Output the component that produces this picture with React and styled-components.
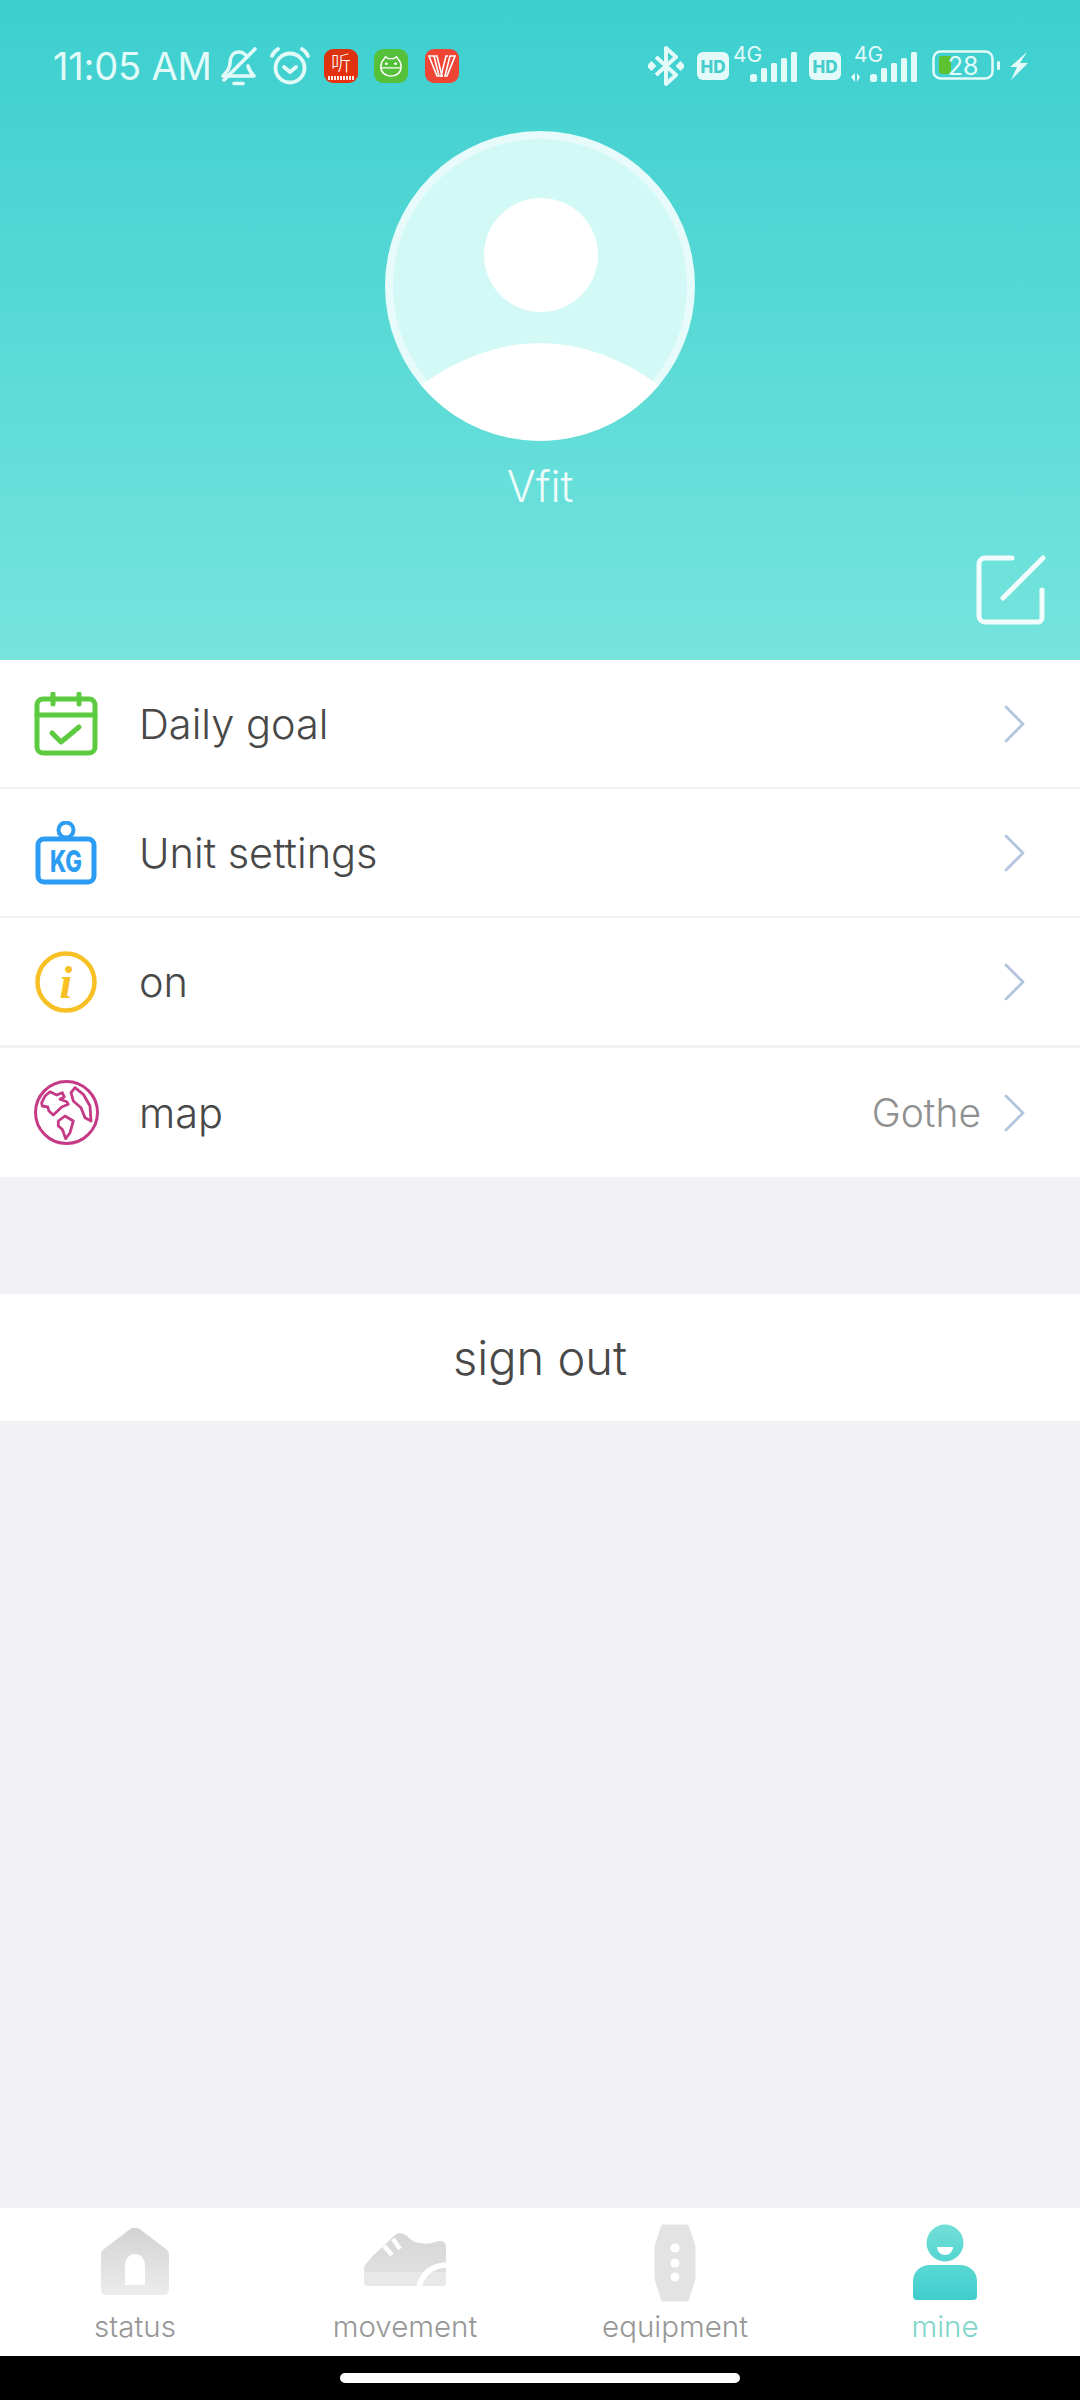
import React from "react"
import styled, { createGlobalStyle } from "styled-components"

const GlobalStyle = createGlobalStyle`
  html, body {
    margin: 0;
    padding: 0;
    background: #f1f1f6;
  }
  * {
    box-sizing: border-box;
  }
`

const Page = styled.div`
  width: 1080px;
  height: 2400px;
  display: flex;
  flex-direction: column;
  font-family: Inter, "Noto Sans", "Liberation Sans", sans-serif;
  background: #f1f1f6;
`

const Header = styled.header`
  height: 660px;
  flex: none;
  display: flex;
  flex-direction: column;
  align-items: center;
  background: linear-gradient(180deg, #3ccfcf 0%, #76e4dd 100%);
`

const StatusBar = styled.div`
  width: 100%;
  height: 131px;
  flex: none;
  padding: 46px 52px 0 53px;
  display: flex;
  justify-content: space-between;
  align-items: flex-start;
  color: #e2fbf9;
`

const StatusGroup = styled.div`
  display: flex;
  align-items: center;
  height: 40px;
`

const Time = styled.span`
  font-size: 38px;
  line-height: 40px;
  font-weight: 400;
  width: 167px;
  white-space: nowrap;
  letter-spacing: -0.2px;
`

const AppBadge = styled.div`
  width: 34px;
  height: 34px;
  flex: none;
  margin-left: ${(p) => p.$gap}px;
  border-radius: 9px;
  background: ${(p) => p.$color};
  display: flex;
  flex-direction: column;
  align-items: center;
  justify-content: center;
  overflow: hidden;
  color: #fff;
`

const BadgeGlyph = styled.span`
  font-size: 20px;
  line-height: 21px;
  font-weight: 300;
  font-family: "Noto Sans CJK SC", sans-serif;
`

const BadgeStrip = styled.span`
  width: 26px;
  height: 4px;
  margin-top: 3px;
  background: repeating-linear-gradient(90deg, #fff 0 2px, transparent 2px 3px);
  opacity: 0.9;
`

const AvatarPicture = styled.svg`
  display: block;
  flex: none;
`

const UserName = styled.div`
  margin-top: 20px;
  font-size: 43px;
  line-height: 50px;
  font-weight: 300;
  color: #ecfcfb;
`

const EditIcon = styled.svg`
  align-self: flex-end;
  margin: 44px 34px 0 0;
  display: block;
`

const MenuList = styled.section`
  flex: none;
  background: #fff;
`

const MenuRow = styled.div`
  height: ${(p) => p.$height}px;
  padding: 0 55px 0 32px;
  display: flex;
  align-items: center;
  border-bottom: ${(p) => p.$rule}px solid #f1f1f3;
`

const IconSlot = styled.div`
  width: 68px;
  height: 68px;
  flex: none;
  display: flex;
  align-items: center;
  justify-content: center;
`

const RowLabel = styled.span`
  margin-left: 39px;
  font-size: 41.500px;
  font-weight: 350;
  color: #484848;
  flex: 1;
`

const RowValue = styled.span`
  font-size: 39px;
  font-weight: 350;
  color: #909090;
  margin-right: 23px;
`

const SignOut = styled.div`
  margin-top: 117px;
  height: 127px;
  flex: none;
  background: #fff;
  display: flex;
  align-items: center;
  justify-content: center;
  font-size: 47px;
  font-weight: 350;
  color: #484848;
`

const Filler = styled.div`
  flex: 1;
`

const TabBar = styled.nav`
  height: 148px;
  flex: none;
  background: #fff;
  display: grid;
  grid-template-columns: repeat(4, 270px);
`

const TabItem = styled.div`
  display: flex;
  flex-direction: column;
  align-items: center;
`

const TabIconSlot = styled.div`
  height: 100px;
  flex: none;
  padding-top: 16px;
  display: flex;
  justify-content: center;
  align-items: flex-start;
`

const TabLabel = styled.span`
  font-size: 29.500px;
  line-height: 36px;
  font-weight: 350;
  color: ${(p) => (p.$active ? "#7fd5cb" : "#979797")};
`

const NavBar = styled.div`
  height: 44px;
  flex: none;
  background: #000;
  display: flex;
  justify-content: center;
  padding-top: 17px;
`

const HomePill = styled.div`
  width: 400px;
  height: 10px;
  border-radius: 5px;
  background: #fff;
`

const BellOff = () => (
  <svg width="38" height="40" viewBox="0 0 38 40" fill="none" stroke="#e2fbf9" strokeWidth="3.600" strokeLinecap="round" strokeLinejoin="round">
    <path d="M27 11c-2-3-4-5-8-5-6 0-9 5-9 11 0 5-3 9-7 13h31c-3-3-5-6-6-10" />
    <path d="M35 3 4 34" />
    <path d="M14 37.500h9" />
  </svg>
)

const AlarmClock = () => (
  <svg width="40" height="38" viewBox="0 0 40 38" fill="none" stroke="#e2fbf9" strokeWidth="3.800" strokeLinecap="round" strokeLinejoin="round" style={{ marginLeft: 12 }}>
    <circle cx="20" cy="21" r="14.500" />
    <path d="M14 20l6 5 6-5" />
    <path d="M2 9c1-3 3-5 6-7" />
    <path d="M38 9c-1-3-3-5-6-7" />
  </svg>
)

const RobotFace = () => (
  <svg width="24" height="24" viewBox="0 0 26 26" fill="none" stroke="#fff" strokeWidth="1.500">
    <path d="M5 6 7 3l3 2h6l3-2 2 3c2 2 3 5 3 8 0 6-5 10-11 10S2 20 2 14c0-3 1-6 3-8Z" />
    <path d="M2 15h22" />
    <path d="M8 9v3M6.500 10.500h3M18 9v3M16.500 10.500h3" />
  </svg>
)

const StripeW = () => (
  <svg width="28" height="24" viewBox="0 0 28 24" fill="none" stroke="#fff" strokeWidth="1.600">
    <path d="M1 2h5l5 20h-2ZM7 2h2l5 20h-2" />
    <path d="M27 2h-5l-5 20h2ZM20 2h-2l-5 20h2" />
  </svg>
)

const Bluetooth = () => (
  <svg width="36" height="40" viewBox="0 0 36 40" fill="#e2fbf9" style={{ marginRight: 13 }}>
    <path d="M8 11l20 18-10 9V2l10 9L8 29" fill="none" stroke="#e2fbf9" strokeWidth="4" strokeLinejoin="round" />
    <rect x="0" y="16.500" width="7" height="7" transform="rotate(45 3.500 20)" />
    <rect x="29" y="16.500" width="7" height="7" transform="rotate(45 32.500 20)" />
  </svg>
)

const HdBadge = ({ gap }) => (
  <svg width="32" height="28" viewBox="0 0 32 28" style={{ marginLeft: gap }}>
    <rect width="32" height="28" rx="6" fill="#e2fbf9" />
    <text x="16" y="20.500" textAnchor="middle" fontSize="17" fontWeight="800" fill="#46cccb" fontFamily="Inter, sans-serif">HD</text>
  </svg>
)

const Signal = ({ arrows }) => (
  <svg width={arrows ? 66 : 64} height="52" viewBox={`0 -6 ${arrows ? 66 : 64} 52`} fill="#e2fbf9" style={{ marginLeft: arrows ? 10 : 4 }}>
    <text x={arrows ? 3 : 0} y="16" fontSize="21" fontFamily="Inter, sans-serif">4G</text>
    {arrows && <path d="M0 31l4-4v9ZM9 31l-3-4v9Z" />}
    <g transform={`translate(${arrows ? 19 : 17} 0)`}>
      <rect x="0" y="28" width="7" height="8" rx="2.500" />
      <rect x="11" y="22" width="6" height="14" rx="1.500" />
      <rect x="21" y="17" width="6" height="19" rx="1.500" />
      <rect x="31" y="12" width="6" height="24" rx="1.500" />
      <rect x="41" y="6" width="6" height="30" rx="1.500" />
    </g>
  </svg>
)

const Battery = () => (
  <svg width="72" height="32" viewBox="0 0 72 32" style={{ marginLeft: 15 }}>
    <rect x="1.500" y="1.500" width="59" height="27" rx="7" fill="none" stroke="#e2fbf9" strokeWidth="2.500" />
    <path d="M7 9a3 3 0 0 1 3-3h9v18h-9a3 3 0 0 1-3-3Z" fill="#5cc22f" />
    <text x="31" y="25" textAnchor="middle" fontSize="25" fill="#e2fbf9" fontFamily="Inter, sans-serif">28</text>
    <rect x="65" y="11" width="3" height="9" rx="1.500" fill="#e2fbf9" />
  </svg>
)

const Bolt = () => (
  <svg width="20" height="28" viewBox="0 0 20 28" fill="#e2fbf9" style={{ marginLeft: 4 }}>
    <path d="M19 0 2 15h7L3 28l17-17h-8Z" />
  </svg>
)

const Avatar = () => (
  <AvatarPicture width="310" height="310" viewBox="0 0 310 310">
    <circle cx="155" cy="155" r="155" fill="#e6fbfa" />
    <circle cx="155" cy="155" r="147" fill="#d3f9f6" />
    <circle cx="156" cy="124" r="57" fill="#fff" />
    <path d="M36 254Q155 170 274 254A155 155 0 0 1 36 254Z" fill="#fff" />
  </AvatarPicture>
)

const Edit = () => (
  <EditIcon width="70" height="70" viewBox="0 0 70 70" fill="none" stroke="#f1fdfc" strokeWidth="5" strokeLinecap="round" strokeLinejoin="round">
    <path d="M36 3H9a6 6 0 0 0-6 6v52a6 6 0 0 0 6 6h53a4 4 0 0 0 4-4V35" />
    <path d="M27 43 67 3" />
  </EditIcon>
)

const CalendarIcon = () => (
  <svg width="64" height="64" viewBox="0 0 64 64" fill="none" stroke="#5ccb3f" strokeWidth="5" strokeLinecap="round" strokeLinejoin="round">
    <rect x="3" y="7" width="58" height="54" rx="6" />
    <path d="M3 23h58M19 2v10M45 2v10" />
    <path d="M18 41l9 9 18-15" />
  </svg>
)

const ScaleIcon = () => (
  <svg width="62" height="64" viewBox="0 0 62 64" fill="none" stroke="#2c9df2" strokeWidth="5">
    <circle cx="31" cy="9" r="7.500" strokeWidth="4" />
    <rect x="3" y="18" width="56" height="43" rx="6" />
    <text x="31" y="51" textAnchor="middle" fontSize="30" fontWeight="800" textLength="32" lengthAdjust="spacingAndGlyphs" fill="#2c9df2" stroke="none" fontFamily="Inter, sans-serif">KG</text>
  </svg>
)

const InfoIcon = () => (
  <svg width="64" height="62" viewBox="0 0 64 62">
    <circle cx="32" cy="31" r="28.500" fill="none" stroke="#f7c024" strokeWidth="4.500" />
    <text x="32" y="47" textAnchor="middle" fontSize="46" fontStyle="italic" fontWeight="700" fill="#f7c024" fontFamily="Liberation Serif, serif">i</text>
  </svg>
)

const GlobeIcon = () => (
  <svg width="66" height="66" viewBox="0 0 66 66" fill="none" stroke="#c53a86" strokeWidth="2.800" strokeLinejoin="round" style={{ marginTop: -2 }}>
    <circle cx="33.500" cy="33.500" r="31" strokeWidth="3" />
    <path d="M8.700 23.700 12 17l5-4.300L23.700 16l5.600-2.300 2 4.300-4.300 2.300 6.700 2.400 1.600 2.600-6.600 2.700-3.400 3.300-5 4.700-4.300-4-1.300-4-5.400-1Z" />
    <path d="M38 13.700 42 8.700l8.300 6.600L57 27l1 15-6-3.300-4-10-7.700-6.700Z" />
    <path d="M25.300 42 32 37l8.300 5-3.300 11.700-4.300 6-3.400-9.400-4-3.300Z" />
  </svg>
)

const Chevron = () => (
  <svg width="21" height="38" viewBox="0 0 21 38" fill="none" stroke="#b3c5de" strokeWidth="2.800" strokeLinecap="round" strokeLinejoin="round">
    <path d="M2 2l17 17L2 36" />
  </svg>
)

const HomeTab = () => (
  <svg width="70" height="68" viewBox="0 0 70 68" style={{ marginTop: 4 }}>
    <defs>
      <linearGradient id="grayFade" x1="0" y1="0" x2="0" y2="1">
        <stop offset="0" stopColor="#d3d3d3" />
        <stop offset="1" stopColor="#ececec" />
      </linearGradient>
    </defs>
    <path d="M29 2a9 9 0 0 1 12 0l25 19a6 6 0 0 1 3 5v36a5 5 0 0 1-5 5H6a5 5 0 0 1-5-5V26a6 6 0 0 1 3-5Z" fill="url(#grayFade)" />
    <path d="M25 57V37a10 11 0 0 1 20 0v20Z" fill="#fff" />
  </svg>
)

const ShoeTab = () => (
  <svg width="82" height="54" viewBox="0 0 82 54" style={{ marginTop: 9 }}>
    <defs>
      <linearGradient id="shoeFade" x1="0" y1="0" x2="0" y2="1">
        <stop offset="0" stopColor="#d6d6d6" />
        <stop offset="0.74" stopColor="#dfdfdf" />
        <stop offset="0.74" stopColor="#e8e8e8" />
        <stop offset="1" stopColor="#e8e8e8" />
      </linearGradient>
    </defs>
    <path d="M31 2c4-3 9-2 12 1 4 4 8 7 13 7 5 1 10 1 15-1 5-2 11-1 11 5v36a3 3 0 0 1-3 3H3a3 3 0 0 1-3-3V34c3-5 7-10 12-14Z" fill="url(#shoeFade)" />
    <path d="M55 54c3-12 11-21 27-22" fill="none" stroke="#fff" strokeWidth="5.500" />
    <path d="M20 13l8 9M29 6l7 10" fill="none" stroke="#fff" strokeWidth="4.500" />
  </svg>
)

const BandTab = () => (
  <svg width="42" height="78" viewBox="0 0 42 78">
    <path d="M8 1h26l7 21v33l-7 22H8L1 55V22Z" fill="#e3e3e3" stroke="#e3e3e3" strokeLinejoin="round" strokeWidth="1" />
    <circle cx="21" cy="24" r="4.500" fill="#fff" />
    <circle cx="21" cy="39" r="4.500" fill="#fff" />
    <circle cx="21" cy="53" r="4.500" fill="#fff" />
  </svg>
)

const PersonTab = () => (
  <svg width="66" height="76" viewBox="0 0 66 76">
    <defs>
      <linearGradient id="mineHead" x1="0" y1="0" x2="0" y2="1">
        <stop offset="0" stopColor="#72dfd7" />
        <stop offset="1" stopColor="#55d5d1" />
      </linearGradient>
      <linearGradient id="mineBody" x1="0" y1="0" x2="0" y2="1">
        <stop offset="0" stopColor="#5ad8d3" />
        <stop offset="1" stopColor="#3fcdcd" />
      </linearGradient>
    </defs>
    <circle cx="33" cy="19" r="18.500" fill="url(#mineHead)" />
    <path d="M25 23h16a8 8 0 0 1-16 0Z" fill="#fff" />
    <path d="M18 41h30c10 0 17 7 17 16v15a4 4 0 0 1-4 4H5a4 4 0 0 1-4-4V57c0-9 7-16 17-16Z" fill="url(#mineBody)" />
  </svg>
)

const menuItems = [
  { label: "Daily goal", icon: <CalendarIcon />, height: 129, rule: 2 },
  { label: "Unit settings", icon: <ScaleIcon />, height: 129, rule: 2 },
  { label: "on", icon: <InfoIcon />, height: 130, rule: 3 },
  { label: "map", icon: <GlobeIcon />, height: 129, rule: 0, value: "Gothe" },
]

const tabs = [
  { label: "status", icon: <HomeTab /> },
  { label: "movement", icon: <ShoeTab /> },
  { label: "equipment", icon: <BandTab /> },
  { label: "mine", icon: <PersonTab />, active: true },
]

const App = () => {
  return (
    <Page>
      <GlobalStyle />
      <Header>
        <StatusBar>
          <StatusGroup>
            <Time>11:05 AM</Time>
            <BellOff />
            <AlarmClock />
            <AppBadge $color="linear-gradient(180deg, #d9330e, #e8300f)" $gap={14}>
              <BadgeGlyph>听</BadgeGlyph>
              <BadgeStrip />
            </AppBadge>
            <AppBadge $color="#55c13a" $gap={16}><RobotFace /></AppBadge>
            <AppBadge $color="#ee4535" $gap={17}><StripeW /></AppBadge>
          </StatusGroup>
          <StatusGroup>
            <Bluetooth />
            <HdBadge />
            <Signal />
            <HdBadge gap={12} />
            <Signal arrows />
            <Battery />
            <Bolt />
          </StatusGroup>
        </StatusBar>
        <Avatar />
        <UserName>Vfit</UserName>
        <Edit />
      </Header>

      <MenuList>
        {menuItems.map((item) => (
          <MenuRow key={item.label} $height={item.height} $rule={item.rule}>
            <IconSlot>{item.icon}</IconSlot>
            <RowLabel>{item.label}</RowLabel>
            {item.value && <RowValue>{item.value}</RowValue>}
            <Chevron />
          </MenuRow>
        ))}
      </MenuList>

      <SignOut>sign out</SignOut>
      <Filler />

      <TabBar>
        {tabs.map((tab) => (
          <TabItem key={tab.label}>
            <TabIconSlot>{tab.icon}</TabIconSlot>
            <TabLabel $active={tab.active}>{tab.label}</TabLabel>
          </TabItem>
        ))}
      </TabBar>
      <NavBar>
        <HomePill />
      </NavBar>
    </Page>
  )
}

export default App
